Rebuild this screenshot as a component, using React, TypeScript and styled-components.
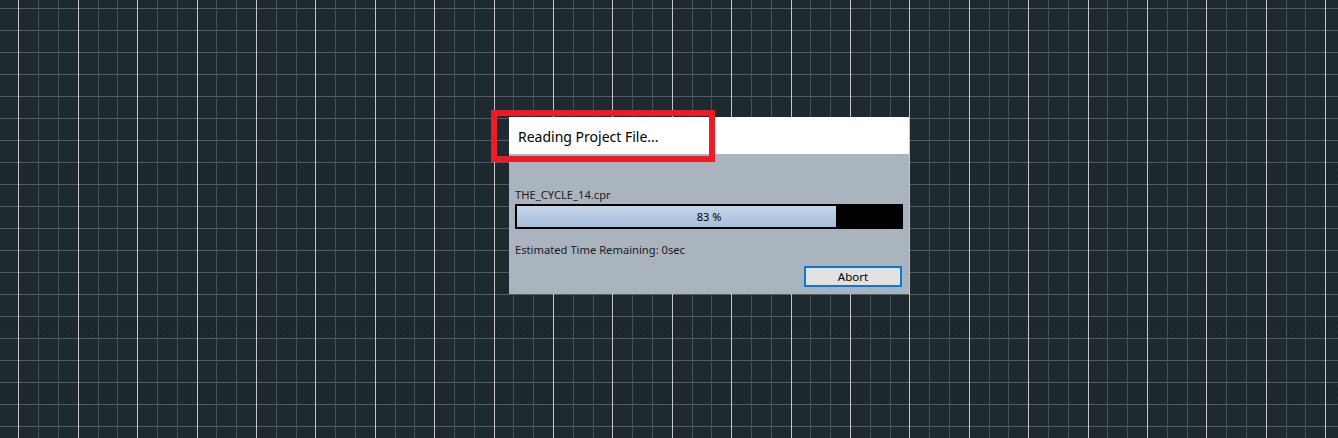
import React from 'react';
import styled, { createGlobalStyle } from 'styled-components';

const GlobalStyle = createGlobalStyle`
    html, body {
        margin: 0;
        padding: 0;
        background: #1f2930;
        overflow: hidden;
    }
`

const STAGE_W = 1338;
const STAGE_H = 438;
const COL_START = 18.3;
const COL_STEP = 19.803;
const ROW_START = 8;
const ROW_STEP = 22;
const DOTTED_LANES = [7, 14, 17];

const Stage = styled.div`
    position: relative;
    width: ${STAGE_W}px;
    height: ${STAGE_H}px;
    box-sizing: border-box;
    padding: 117px 0 0 509px;
    background: #1f2930;
    font-family: "Noto Sans", "Open Sans", "DejaVu Sans", sans-serif;
`

const GridLayer = styled.svg`
    position: absolute;
    left: 0;
    top: 0;
    width: 100%;
    height: 100%;
    shape-rendering: crispEdges;
`

const Dialog = styled.div`
    position: relative;
    width: 400px;
    display: flex;
    flex-direction: column;
    box-sizing: border-box;
`

const TitleBar = styled.div`
    height: 37px;
    background: #ffffff;
    display: flex;
    align-items: center;
    padding-left: 9px;
    padding-top: 1px;
    box-sizing: border-box;
    font-size: 14px;
    color: #000;
`

const Body = styled.div`
    background: #aab4be;
    height: 140px;
    box-sizing: border-box;
    padding: 33px 6px 0 6px;
    display: flex;
    flex-direction: column;
    font-size: 11.2px;
    color: #1c1c1c;
`

const FileName = styled.div`
    line-height: 16px;
    height: 16px;
`

const ProgressTrack = styled.div`
    margin-top: 1px;
    height: 25px;
    box-sizing: border-box;
    border: 2px solid #000;
    background: #000;
    position: relative;
`

const ProgressFill = styled.div`
    height: 100%;
    background: linear-gradient(to bottom, #c4d6ea, #a6bfda);
`

const ProgressLabel = styled.span`
    position: absolute;
    left: 0;
    right: 0;
    top: 0;
    bottom: 0;
    display: flex;
    align-items: center;
    justify-content: center;
    font-size: 11px;
    color: #000;
`

const Remaining = styled.div`
    margin-top: 13px;
    line-height: 16px;
    height: 16px;
`

const ButtonRow = styled.div`
    display: flex;
    justify-content: flex-end;
    margin-top: 8px;
`

const Button = styled.button`
    width: 98px;
    height: 21px;
    margin-right: 1px;
    box-sizing: border-box;
    border: 2px solid #0a78d7;
    background: #e1e1e1;
    font-family: inherit;
    font-size: 11.5px;
    color: #000;
    padding: 0;
    line-height: 16px;
`

const Highlight = styled.div`
    position: absolute;
    left: 491px;
    top: 110px;
    width: 224px;
    height: 52px;
    box-sizing: border-box;
    border: 6px solid #ed1c24;
    pointer-events: none;
`

const ArrangeGrid: React.FC = () => {
    const cols: { x: number; major: boolean }[] = [];
    for (let k = 0; COL_START + COL_STEP * k < STAGE_W; k++) {
        cols.push({ x: Math.round(COL_START + COL_STEP * k), major: k % 3 === 0 });
    }
    const rows: number[] = [];
    for (let y = ROW_START; y < STAGE_H; y += ROW_STEP) rows.push(y);

    return <GridLayer viewBox={`0 0 ${STAGE_W} ${STAGE_H}`}>
        <defs>
            <pattern id="lane-dots" width="6" height="6" patternUnits="userSpaceOnUse">
                <rect x="1" y="1" width="2" height="2" fill="#192026" />
                <rect x="4" y="4" width="2" height="2" fill="#1b232a" />
            </pattern>
        </defs>
        {DOTTED_LANES.map(i => <rect key={i} x={0} y={ROW_START + ROW_STEP * i} width={STAGE_W} height={ROW_STEP} fill="url(#lane-dots)" />)}
        {rows.map(y => <rect key={'r' + y} x={0} y={y} width={STAGE_W} height={1} fill="#545c63" />)}
        {cols.filter(c => !c.major).map(c => <rect key={'m' + c.x} x={c.x} y={0} width={1} height={STAGE_H} fill="#4a5259" />)}
        {cols.filter(c => c.major).map(c => <rect key={'M' + c.x} x={c.x} y={0} width={1} height={STAGE_H} fill="#c4c7ca" />)}
    </GridLayer>
}

const App: React.FC = () => {
    const percent = 83;
    return <>
        <GlobalStyle />
        <Stage>
            <ArrangeGrid />
            <Dialog>
                <TitleBar>Reading Project File...</TitleBar>
                <Body>
                    <FileName>THE_CYCLE_14.cpr</FileName>
                    <ProgressTrack>
                        <ProgressFill style={{ width: `${percent}%` }} />
                        <ProgressLabel>{percent} %</ProgressLabel>
                    </ProgressTrack>
                    <Remaining>Estimated Time Remaining: 0sec</Remaining>
                    <ButtonRow>
                        <Button>Abort</Button>
                    </ButtonRow>
                </Body>
            </Dialog>
            <Highlight />
        </Stage>
    </>
}

export default App;
